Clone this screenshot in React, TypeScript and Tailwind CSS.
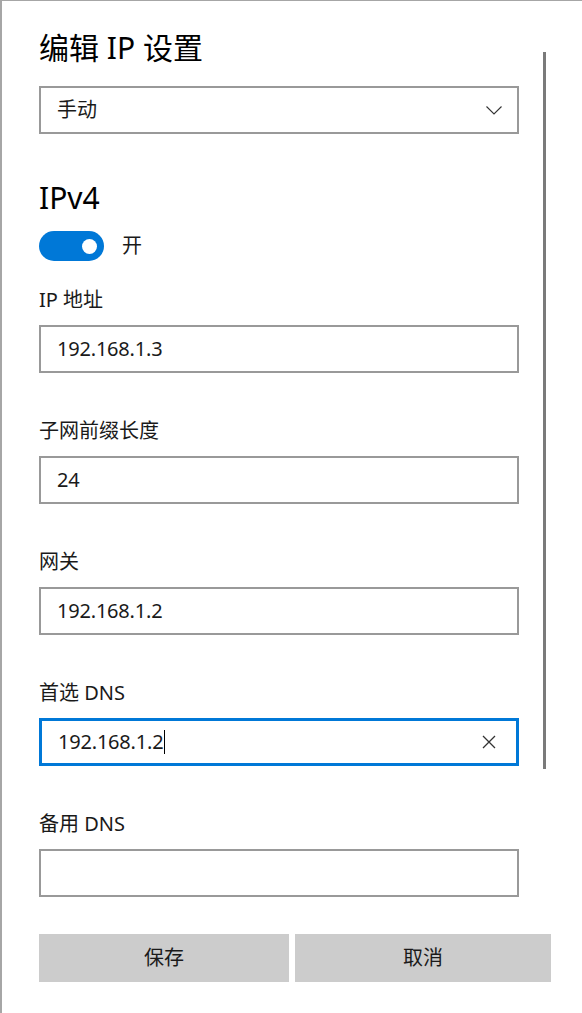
import { useState } from 'react';

const font = { fontFamily: '"Noto Sans", "Noto Sans CJK SC", sans-serif' };

function Field({ label, value, focused }: { label: string; value: string; focused?: boolean }) {
  return (
    <div className="mt-[43px] first:mt-0">
      <div className="text-[20px] leading-[30px] text-[#1a1a1a] mb-[10px]">{label}</div>
      <div
        className={
          'h-[48px] flex items-center px-[16px] bg-white ' +
          (focused ? 'border-[3px] border-[#0078d7]' : 'border-[2px] border-[#999999]')
        }
      >
        <span className="text-[20px] tracking-[-0.2px] text-[#1a1a1a] flex-1 flex items-center">
          {value}
          {focused && <span className="inline-block w-px h-[24px] bg-black ml-px" />}
        </span>
        {focused && (
          <svg width="14" height="14" viewBox="0 0 14 14" className="mr-[4px]">
            <path d="M1 1L13 13M13 1L1 13" stroke="#333" strokeWidth="1.3" />
          </svg>
        )}
      </div>
    </div>
  );
}

export default function App() {
  const [on] = useState(true);

  return (
    <div className="w-[582px] h-[1013px] bg-white border-l-2 border-t border-[#a6a6a6] relative" style={font}>
      <div className="absolute left-[541px] top-[51px] w-[3px] h-[717px] bg-[#7a7a7a]" />

      <div className="pl-[37px] pr-[63px] pt-[27px]">
        <h1 className="text-[30px] leading-[40px] text-black font-normal">编辑 IP 设置</h1>

        <div className="mt-[18px] h-[48px] border-[2px] border-[#999999] flex items-center justify-between px-[16px]">
          <span className="text-[20px] text-[#1a1a1a]">手动</span>
          <svg width="16" height="9" viewBox="0 0 16 9" className="mr-[-1px]">
            <path d="M0.5 0.5L8 8L15.5 0.5" fill="none" stroke="#333" strokeWidth="1.1" />
          </svg>
        </div>

        <div className="mt-[44px] text-[30px] leading-[40px] text-black">IPv4</div>

        <div className="mt-[13px] flex items-center gap-[18px]">
          <div className="w-[65px] h-[30px] rounded-full bg-[#0078d7] flex items-center justify-end pr-[7px]">
            <div className="w-[15px] h-[15px] rounded-full bg-white" />
          </div>
          <span className="text-[20px] text-[#1a1a1a]">{on ? '开' : '关'}</span>
        </div>

        <div className="mt-[24px]">
          <Field label="IP 地址" value="192.168.1.3" />
          <Field label="子网前缀长度" value="24" />
          <Field label="网关" value="192.168.1.2" />
          <Field label="首选 DNS" value="192.168.1.2" focused />
          <Field label="备用 DNS" value="" />
        </div>
      </div>

      <div className="pl-[37px] mt-[37px] grid grid-cols-[250px_256px] gap-[6px]">
        <button className="h-[48px] bg-[#cccccc] text-[20px] text-[#1a1a1a]">保存</button>
        <button className="h-[48px] bg-[#cccccc] text-[20px] text-[#1a1a1a]">取消</button>
      </div>
    </div>
  );
}
